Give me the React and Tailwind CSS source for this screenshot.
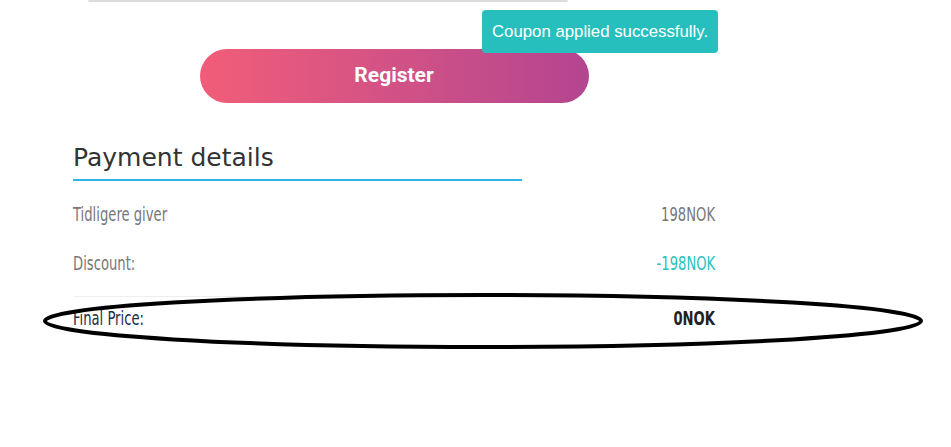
export default function App() {
  const oswald = { fontFamily: '"DejaVu Sans Condensed", "DejaVu Sans", sans-serif' }
  return (
    <div className="relative w-[951px] h-[447px] bg-white overflow-hidden">
      {/* bottom edge of the input above */}
      <div className="ml-[88px] w-[480px] h-[2px] bg-[#dcdcdc] rounded-b"></div>

      {/* toast */}
      <div className="absolute left-[482px] top-[10px] w-[236px] h-[43px] rounded bg-[#27bfbd] flex items-center justify-center text-white text-[16.8px]" style={{ fontFamily: '"Liberation Sans", Arial, sans-serif' }}>
        Coupon applied successfully.
      </div>

      <div className="ml-[73px] w-[642px]">
        <div className="mt-[47px] flex justify-center">
          <button className="w-[389px] h-[54px] rounded-full bg-gradient-to-r from-[#f15d78] to-[#b4458f] text-white text-[21px] font-bold" style={{ fontFamily: 'Roboto, sans-serif' }}>
            Register
          </button>
        </div>

        <div className="mt-[38px] w-[449px] border-b-2 border-[#33b5e5] pb-[4px]">
          <h2 className="text-[25px] leading-[34px] text-[#333]" style={{ fontFamily: '"DejaVu Sans", Verdana, sans-serif' }}>Payment details</h2>
        </div>

        <div style={oswald} className="text-[19px]">
          <div className="flex justify-between items-center h-[49px] mt-[9px] text-[#777]">
            <span className="inline-block scale-x-[0.77] origin-left">Tidligere giver</span>
            <span className="inline-block scale-x-[0.77] origin-right">198NOK</span>
          </div>
          <div className="flex justify-between items-center h-[49px] text-[#777]">
            <span className="inline-block scale-x-[0.77] origin-left">Discount:</span>
            <span className="inline-block scale-x-[0.77] origin-right text-[#2bbfbf]">-198NOK</span>
          </div>
          <div className="border-t border-[#eeeeee] mt-[8px] flex justify-between items-center h-[44px]">
            <span className="inline-block scale-x-[0.77] origin-left text-[#1e2a4a]">Final Price:</span>
            <span className="inline-block scale-x-[0.77] origin-right font-bold text-[#222]">0NOK</span>
          </div>
        </div>
      </div>

      {/* hand-drawn annotation */}
      <svg className="absolute left-0 top-0 pointer-events-none" width="951" height="447">
        <ellipse cx="483" cy="321" rx="438" ry="26" fill="none" stroke="#000" strokeWidth="4" />
      </svg>
    </div>
  )
}
